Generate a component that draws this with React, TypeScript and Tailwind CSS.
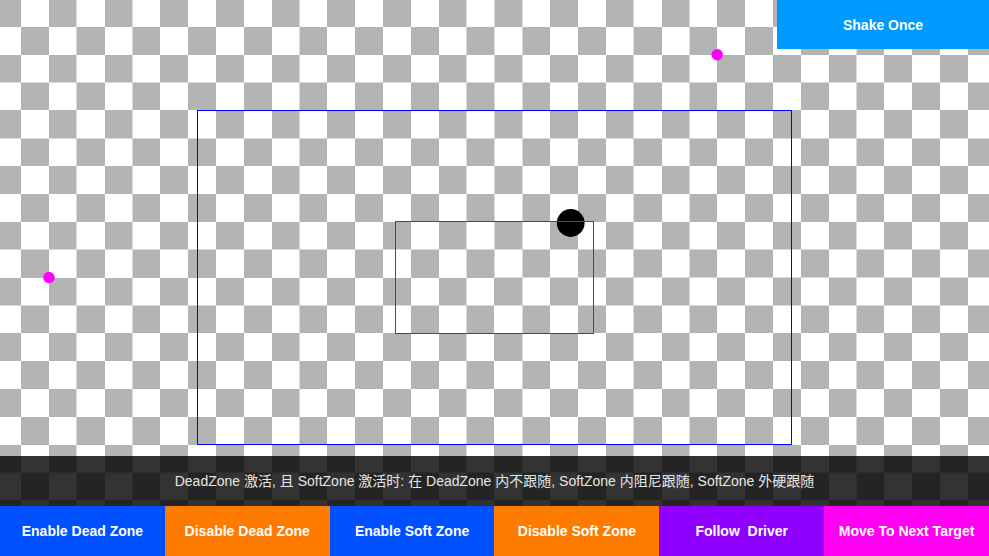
import React from "react";

const VIEW_WIDTH = 989;
const VIEW_HEIGHT = 556;
const CELL = 27.84;
const SEAMS_X = [76, 132, 299, 466, 522, 633, 689, 856];
const SEAMS_Y = [82, 138, 249, 305, 472];

const edgeX = (i: number) => Math.round(21.2 + CELL * (i - 1));
const edgeY = (i: number) => Math.round(26.95 + CELL * (i - 1));

function Scene() {
  const cells = [];
  for (let row = 0; row < 20; row++) {
    for (let col = 0; col < 36; col++) {
      if ((row + col) % 2 === 0) {
        cells.push(
          <rect
            key={`${row}-${col}`}
            x={edgeX(col)}
            y={edgeY(row)}
            width={edgeX(col + 1) - edgeX(col)}
            height={edgeY(row + 1) - edgeY(row)}
            fill="#b3b3b3"
          />,
        );
      }
    }
  }
  return (
    <svg
      className="absolute inset-0 h-full w-full"
      viewBox={`0 0 ${VIEW_WIDTH} ${VIEW_HEIGHT}`}
      preserveAspectRatio="xMidYMid slice"
      aria-hidden="true"
    >
      <g shapeRendering="crispEdges">
        {cells}
        {SEAMS_X.map((x) => (
          <rect key={x} x={x} y={0} width={1} height={VIEW_HEIGHT} fill="#d9d9d9" />
        ))}
        {SEAMS_Y.map((y) => (
          <rect key={y} x={0} y={y} width={VIEW_WIDTH} height={1} fill="#d9d9d9" />
        ))}
        <rect x={494} y={0} width={1} height={277} fill="#d9d9d9" />
        <rect x={495} y={277} width={494} height={1} fill="#d9d9d9" />
      </g>
      <circle cx="49" cy="277.5" r="5.7" fill="#ff00ff" />
      <circle cx="717.2" cy="54.7" r="5.7" fill="#ff00ff" />
      <circle cx="570.7" cy="223" r="13.9" fill="#000000" />
      <rect x="197.5" y="110.5" width="594" height="334" fill="none" stroke="#0000ff" />
      <rect x="395.5" y="221.5" width="198" height="112" fill="none" stroke="#ff0000" />
    </svg>
  );
}

const actions = [
  { label: "Enable Dead Zone", color: "bg-[#0050ff]" },
  { label: "Disable Dead Zone", color: "bg-[#ff7b00]" },
  { label: "Enable Soft Zone", color: "bg-[#0050ff]" },
  { label: "Disable Soft Zone", color: "bg-[#ff7b00]" },
  { label: "Follow  Driver", color: "bg-[#9000ff]" },
  { label: "Move To Next Target", color: "bg-[#ff00f2]" },
];

export default function App() {
  return (
    <main className="relative flex min-h-screen flex-col overflow-hidden bg-white font-['Liberation_Sans','Noto_Sans_CJK_SC',sans-serif] text-sm text-white">
      <Scene />
      <div className="relative flex justify-end">
        <button type="button" className="h-[49px] w-3/14 bg-[#0099ff] font-bold">
          Shake Once
        </button>
      </div>
      <div className="relative mt-auto">
        <p className="flex h-[50px] items-center justify-center bg-black/80 text-[#e6e6e6]">
          DeadZone 激活, 且 SoftZone 激活时: 在 DeadZone 内不跟随, SoftZone 内阻尼跟随, SoftZone 外硬跟随
        </p>
        <div className="grid grid-cols-6">
          {actions.map((action) => (
            <button
              key={action.label}
              type="button"
              className={`h-[50px] font-bold whitespace-pre ${action.color}`}
            >
              {action.label}
            </button>
          ))}
        </div>
      </div>
    </main>
  );
}
